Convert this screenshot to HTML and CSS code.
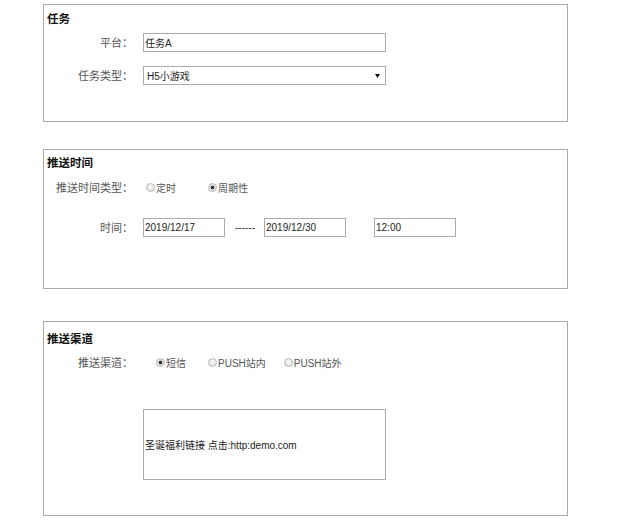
FILE: index.html
```html
<!DOCTYPE html>
<html lang="zh-CN">
<head>
<meta charset="utf-8">
<title>任务</title>
<link rel="stylesheet" href="styles.css">
</head>
<body>
<div class="page">
  <section class="panel panel-task">
    <h3 class="panel-title">任务</h3>
    <div class="row row-first">
      <label class="lbl">平台：</label>
      <div class="field field-wide">任务A</div>
    </div>
    <div class="row row-second">
      <label class="lbl">任务类型：</label>
      <div class="field field-wide field-select">
        <span>H5小游戏</span>
        <svg class="arrow" width="5" height="4" viewBox="0 0 5 4"><polygon points="0,0 5,0 2.5,4" fill="#111"/></svg>
      </div>
    </div>
  </section>

  <section class="panel panel-time">
    <h3 class="panel-title">推送时间</h3>
    <div class="row row-radio-time">
      <label class="lbl">推送时间类型：</label>
      <div class="opts opts-time">
        <label class="opt"><input type="radio" name="t" class="radio"><span>定时</span></label>
        <label class="opt opt-next"><input type="radio" name="t" class="radio" checked><span>周期性</span></label>
      </div>
    </div>
    <div class="row row-dates">
      <label class="lbl">时间：</label>
      <div class="field field-date">2019/12/17</div>
      <span class="dash">------</span>
      <div class="field field-date">2019/12/30</div>
      <div class="field field-date field-clock">12:00</div>
    </div>
  </section>

  <section class="panel panel-channel">
    <h3 class="panel-title">推送渠道</h3>
    <div class="row row-radio-channel">
      <label class="lbl">推送渠道：</label>
      <div class="opts opts-channel">
        <label class="opt"><input type="radio" name="c" class="radio" checked><span>短信</span></label>
        <label class="opt opt-inner"><input type="radio" name="c" class="radio"><span>PUSH站内</span></label>
        <label class="opt opt-outer"><input type="radio" name="c" class="radio"><span>PUSH站外</span></label>
      </div>
    </div>
    <div class="row row-message">
      <span class="lbl"></span>
      <div class="field message">圣诞福利链接 点击:http:demo.com</div>
    </div>
  </section>
</div>
</body>
</html>
```
FILE: styles.css
```css
body {
  margin: 0;
  background: #fff;
  color: #333;
  font-family: "Noto Sans CJK SC", "Liberation Sans", sans-serif;
}

.page {
  padding: 4px 0 0 43px;
}

.panel {
  box-sizing: border-box;
  width: 525px;
  border: 1px solid #ababab;
}

.panel-task {
  height: 118px;
  padding-top: 5px;
  margin-bottom: 27px;
}

.panel-time {
  height: 140px;
  padding-top: 4px;
  margin-bottom: 32px;
}

.panel-channel {
  height: 195px;
  padding-top: 8px;
}

.panel-title {
  margin: 0 0 0 3px;
  font-size: 11.5px;
  font-weight: bold;
  line-height: 16px;
  color: #111;
}

.row {
  display: flex;
  align-items: center;
  height: 19px;
}

.row-first { margin-top: 7px; }
.row-second { margin-top: 14px; }
.row-radio-time { margin-top: 8px; }
.row-dates { margin-top: 21px; }
.row-radio-channel { margin-top: 7px; }
.row-message { margin-top: 37px; height: auto; }

.lbl {
  flex: none;
  width: 89px;
  margin-right: 10px;
  text-align: right;
  font-size: 11px;
  line-height: 19px;
  color: #555;
}

.field {
  box-sizing: border-box;
  display: flex;
  align-items: center;
  height: 19px;
  padding: 0 1px;
  border: 1px solid #ababab;
  background: #fff;
  color: #222;
  font-family: "Liberation Sans", "Noto Sans CJK SC", sans-serif;
  font-size: 10px;
  white-space: nowrap;
}

.field-wide {
  width: 243px;
}

.field-select {
  justify-content: space-between;
  padding-left: 3px;
}

.arrow {
  margin-right: 4px;
}

.field-date {
  width: 82px;
}

.dash {
  margin: 0 9px 0 10px;
  font-family: "Liberation Sans", sans-serif;
  font-size: 10px;
  color: #333;
}

.field-clock {
  margin-left: 28px;
}

.opts {
  display: flex;
  align-items: center;
}

.opts-time {
  padding-left: 3px;
}

.opt-next {
  margin-left: 32px;
}

.opts-channel {
  padding-left: 13px;
}

.opt-inner {
  margin-left: 22px;
}

.opt-outer {
  margin-left: 18px;
}

.opt {
  display: flex;
  align-items: center;
  font-family: "Liberation Sans", "Noto Sans CJK SC", sans-serif;
  font-size: 10px;
  color: #555;
}

.radio {
  -webkit-appearance: none;
  appearance: none;
  box-sizing: border-box;
  width: 9px;
  height: 9px;
  margin: 0 1px 0 0;
  border: 1px solid #b8b8b8;
  border-radius: 50%;
  background: radial-gradient(circle at 50% 40%, #fafafa, #dcdcdc);
}

.radio:checked {
  background: radial-gradient(circle, #333 0, #333 1.6px, #e6e6e6 2.2px, #d8d8d8 100%);
}

.message {
  width: 243px;
  height: 71px;
  padding-left: 1px;
  color: #222;
}
```
